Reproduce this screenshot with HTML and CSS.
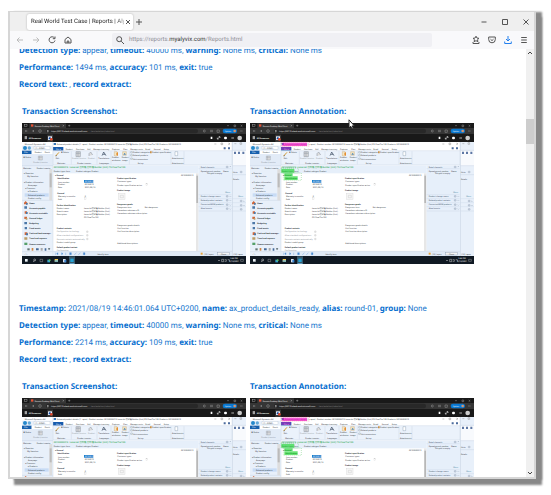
FILE: index.html
```html
<!DOCTYPE html>
<html lang="en">
<head>
<meta charset="utf-8">
<title>Real World Test Case | Reports | Alyvix</title>
<link rel="stylesheet" href="styles.css">
</head>
<body>
<svg class="defs" aria-hidden="true">
  <symbol id="desktop" viewBox="0 0 672 423">
    <rect width="672" height="423" fill="#eaf1fb"/>
    <!-- remote browser -->
    <rect width="672" height="57" fill="#191919"/>
    <rect x="22" y="1" width="110" height="15" fill="#363636"/>
    <rect y="15" width="672" height="18" fill="#353535"/>
    <rect x="72" y="17" width="456" height="14" rx="7" fill="#282828"/>
    <g fill="none" stroke="#aaa" stroke-width="1.3">
      <rect x="8" y="5" width="7" height="6"/><path d="M122 6l4 4m0-4l-4 4M138 8h7m-3-3v6M615 8h6M636 6h5v5h-5zM656 6l5 5m0-5l-5 5M16 24h-6m3-3l-3 3 3 3M30 24h6m-3-3l3 3-3 3"/>
      <circle cx="54" cy="24" r="4"/><rect x="76" y="23" width="4" height="4"/><circle cx="547" cy="24" r="3"/><path d="M564 22h9m-9 4h9M585 21h7v7h-7zM654 24h8"/>
    </g>
    <rect x="27" y="4" width="7" height="7" fill="#e65335"/>
    <rect x="602" y="17" width="43" height="14" rx="7" fill="#0878d2"/>
    <circle cx="638" cy="24" r="4" fill="#d8946c"/>
    <g fill="#eee">
      <text x="38" y="11">Remote Desktop Web Client</text>
      <text x="88" y="26">https://00115.rdweb.wvd.microsoft.com</text><text x="206" y="26" fill="#888">/arm/webclient/index.html</text>
      <text x="608" y="26">Update</text><text x="20" y="47" class="strong">All Resources</text>
    </g>
    <path d="M8 41h7m-7 3h7m-7 3h7" stroke="#fff" stroke-width="2"/>
    <rect x="76" y="35" width="17" height="22" fill="#3b3b3b"/><path d="M78 40h12v11H78z" fill="#e9f0fc"/><path d="M80 45l4-4 5 8h-9z" fill="#164c9b"/><circle cx="88" cy="49" r="4" fill="#e24a2a"/>
    <g fill="#fff"><path d="M566 41h5v7h-5zM608 41h5v8h-5zM606 43h9v4h-9z"/><circle cx="653" cy="45" r="7" fill="#ccc"/><path d="M628 44h8v2h-8z"/></g>
    <path d="M586 48l8-7m-8 3v4h4m0-7h4v4" fill="none" stroke="#fff" stroke-width="1.6"/>
    <!-- navigation pane -->
    <rect y="57" width="92" height="342" fill="#e8f0fa"/>
    <rect y="57" width="92" height="11" fill="#fff"/>
    <circle cx="9" cy="75" r="6" fill="#2588cb"/><circle cx="22" cy="75" r="5" fill="#65a9d8"/>
    <rect x="36" y="70" width="48" height="9" fill="#fff" stroke="#aebdce"/>
    <rect y="83" width="29" height="10" fill="#1760ad"/><rect x="29" y="83" width="63" height="10" fill="#fff"/>
    <rect y="93" width="92" height="35" fill="#e2ebf7"/><path d="M0 128h92M0 232h92" stroke="#bac8da"/>
    <path d="M49 99h12v12H49zM49 103h12m-8-4v12" fill="#ddd" stroke="#8993a0"/>
    <rect x="82" y="138" width="8" height="94" fill="#ddd"/><rect x="83" y="151" width="6" height="42" fill="#bbb"/>
    <rect x="8" y="211" width="72" height="10" fill="#c8dcf5"/>
    <g fill="#303640">
      <text x="8" y="65">Microsoft Dynamics AX</text><text x="39" y="77">(1) › DEMO ›</text><text x="7" y="90" fill="#fff">File</text><text x="38" y="90">Product</text><text x="68" y="90">Purch</text>
      <text x="4" y="104">✖ Delete</text><text x="34" y="120" fill="#8b929b">Product/service</text><text x="4" y="137">Maintain</text><text x="44" y="137">Product master</text>
      <text x="6" y="152">▸ Favorites</text><text x="16" y="162">My favorites</text><text x="6" y="179">▾ Product information</text><text x="18" y="189">Area page</text><text x="10" y="199">▾ Common</text><text x="18" y="208">▸ Products</text><text x="18" y="218">Released products</text><text x="18" y="227">Product config</text>
    </g>
    <g class="strong" fill="#303640">
      <text x="22" y="242">Home</text><text x="22" y="257">Accounts payable</text><text x="22" y="273">Accounts receivable</text><text x="22" y="288">General ledger</text><text x="22" y="303">Budgeting</text><text x="22" y="318">Fixed assets</text><text x="22" y="334">Cash and bank manage..</text><text x="22" y="349">Travel and expense</text><text x="22" y="365">Human resources</text>
    </g>
    <g fill="#d0683c"><path d="M6 239l5-5 5 5v5H6zM8 265h7v7H8zM7 281h8v7H7zM8 328h8v8H8z"/></g>
    <g fill="#4c78a8"><path d="M12 240h5v5h-5zM7 250h8v7H7zM7 297h8v7H7zM8 312h7v7H8zM12 331h6v6h-6zM12 267h5v6h-5z"/></g>
    <g fill="#bc9c66"><path d="M7 343h9v7H7zM11 285h5v5h-5z"/></g><path d="M7 359h9v7H7z" fill="#55a06a"/>
    <path d="M16 376h7v6h-7z" fill="#677"/><path d="M29 375h5v8h-5z" fill="#cf8645"/><path d="M42 376h8v6h-8zM68 376h5v7h-5z" fill="#466b9a"/><path d="M56 375h6v8h-6z" fill="#aaa"/><path d="M78 376h7l-4 6z" fill="#455"/>
    <path d="M0 386h92" stroke="#bcc9d8"/><text x="7" y="395" fill="#555">‹ 1 ›</text>
    <!-- window behind, right edge -->
    <rect x="630" y="57" width="42" height="342" fill="#e8f0fa"/><rect x="632" y="83" width="40" height="45" fill="#f8fafd"/><path d="M631 57v342M632 82h40M632 128h40M632 155h40" stroke="#bac8da"/>
    <path d="M637 62h6m11-3h5v5h-5z" fill="none" stroke="#666"/>
    <g fill="#5e78a5"><path d="M636 86h6v7h-6zM648 86h6v7h-6zM661 86h6v7h-6z"/></g>
    <!-- detail window -->
    <rect x="93" y="57" width="537" height="342" fill="#fff"/>
    <rect x="93" y="72" width="31" height="11" fill="#175bad"/>
    <path d="M93 83h537v43H93z" fill="#ebf2fb"/><path d="M93 83h537M93 126h537M93 57v342M630 57v342M148 85v39M225 85v39M267 85v39M322 85v39M447 85v39M486 85v39" stroke="#bdc9df" fill="none"/>
    <rect x="95" y="60" width="7" height="6" fill="#3876b8"/>
    <path d="M577 63h6m14-3h5v5h-5zM619 60l5 5m0-5l-5 5" fill="none" stroke="#555"/>
    <rect x="93" y="127" width="436" height="24" fill="#e6effa"/><rect x="529" y="127" width="101" height="258" fill="#e6effa"/>
    <rect x="522" y="151" width="7" height="234" fill="#e7e7e7"/><rect x="523" y="158" width="5" height="82" fill="#b8b8b8"/>
    <path d="M101 99l10-11" stroke="#d69c30" stroke-width="3"/><path d="M101 99l3-1" stroke="#333" stroke-width="2"/>
    <path d="M162 86h13v15h-13zM162 91h13m-7-5v15M201 99v-7l5-5 6 9" fill="#ddd" stroke="#9aa2ac" stroke-width="2"/>
    <path d="M240 98l5-11 7 11m-9-4h7" fill="none" stroke="#33445b" stroke-width="2"/>
    <path d="M277 86h8v13h-8zM302 86h11v11h-11z" fill="#f7e7c2" stroke="#bd9658"/><path d="M282 93l6-7v14z" fill="#e68e2f"/><path d="M304 95l4-6 4 6z" fill="#4b87bd"/>
    <path d="M326 86h5v4h-5zM326 95h5v4h-5zM326 105h5v4h-5zM459 86h8v12h-8z" fill="#fff" stroke="#667e99"/><path d="M384 85h5v6h-5z" fill="#ce9146"/><path d="M605 73h6v6h-6zM618 73h6v6h-6z" fill="#4b6b9d"/>
    <rect x="186" y="171" width="28" height="8" fill="#1674c7"/>
    <rect x="187" y="224" width="5" height="5" fill="#fff" stroke="#ccc"/><rect x="372" y="182" width="5" height="5" fill="#fff" stroke="#ccc"/>
    <rect x="290" y="212" width="19" height="17" fill="#f6f6f6" stroke="#ccc"/><path d="M295 217h9v7h-9z" fill="none" stroke="#bbb"/>
    <g fill="#353941">
      <text x="104" y="66">Released product details (1 - apex)  - Product number: 00100000015, LaserJet 打印機 Builder (Unit) P5 ClearTier100, Products: 00100000015</text>
      <text x="102" y="80" fill="#fff">File ▾</text><text x="131" y="80">Product</text><text x="162" y="80">Purchase</text><text x="196" y="80">Sell</text><text x="214" y="80">Manage inventory</text><text x="270" y="80">Engineer</text><text x="304" y="80">Plan</text><text x="325" y="80">Manage costs</text><text x="370" y="80">Retail</text><text x="395" y="80">General</text><text x="425" y="80">Setup</text>
      <text x="117" y="90">✖ Delete</text><text x="101" y="107">Edit</text><text x="150" y="108" fill="#959ba4">Product/service</text><text x="198" y="108" fill="#959ba4">Product</text><text x="229" y="108">Translations</text><text x="270" y="106">Product</text><text x="270" y="113">attributes</text><text x="299" y="106">Product</text><text x="300" y="113">image</text>
      <text x="333" y="90">Product categories</text><text x="390" y="90">Product specification</text><text x="333" y="100">Related products</text><text x="333" y="110">Unit conversions</text><text x="450" y="107">Attachments</text>
      <text x="106" y="122">Maintain</text><text x="166" y="122">Product master</text><text x="232" y="122">Languages</text><text x="347" y="122">Set up</text><text x="450" y="122">Attachments</text>
      <text x="95" y="135" class="record" fill="#27a447">00100000015 : LaserJet 打印機 打印機 Builder (Unit) P5 ClearTier100</text>
      <text x="95" y="146">Product type: Item</text><text x="162" y="146">Product subtype: Product</text><text x="477" y="158">00100000015</text>
      <text x="108" y="179">Item number</text><text x="188" y="178" fill="#fff">00100015</text><text x="108" y="187">Product</text><text x="188" y="187">00100015</text><text x="108" y="196">Date</text><text x="188" y="196">2021/08/19</text>
      <text x="108" y="221">Warranty in months</text><text x="188" y="221">0</text><text x="108" y="231">Sold</text>
      <text x="104" y="257">Product name</text><text x="186" y="257">LaserJet打印機 Builder (Unit)</text><text x="104" y="266">Search name</text><text x="186" y="266">LaserJet打印機 Builder (Unit)</text><text x="104" y="275">Description</text><text x="186" y="275">LaserJet打印機 Builder (Unit)</text><text x="186" y="284">P5 ClearTier100</text>
      <text x="286" y="178">Customer types</text><text x="286" y="188">Product specification active</text><text x="286" y="256">Dangerous item</text><text x="368" y="256">Not dangerous</text><text x="286" y="265">Hazardous substance ID</text><text x="286" y="274">Hazardous substance description</text>
      <text x="286" y="310">Dangerous goods details</text><text x="286" y="318">Unit function</text><text x="286" y="327">Unit function description</text><text x="286" y="363">Additional descriptions</text>
      <text x="536" y="146">Operating unit number</text><text x="604" y="146">Name</text><text x="554" y="154">The grid is empty.</text><text x="610" y="210" fill="#4c87a4">More</text><text x="649" y="222" fill="#4c87a4">More</text><text x="633" y="151">Units</text><text x="633" y="170">Details</text>
      <text x="634" y="395">(10) | apex</text>
    </g>
    <g class="strong" fill="#30343b">
      <text x="99" y="158">▴ General</text><text x="106" y="168">Identification</text><text x="106" y="212">General</text><text x="104" y="248">Further identification</text><text x="104" y="318">Product variants</text><text x="104" y="374">Default product variant</text>
      <text x="285" y="168">Product specification</text><text x="285" y="205">Product image</text><text x="285" y="246">Dangerous goods</text>
    </g>
    <g fill="#8e9298"><text x="104" y="328">Configuration technology</text><text x="104" y="339">Allow standard configurations</text><text x="104" y="350">Generate variants automatically</text><text x="104" y="360" fill="#444">Product model group</text><text x="104" y="383">Configuration</text><path d="M194 324h4v4h-4zM194 335h4v4h-4zM194 346h4v4h-4z" fill="none" stroke="#aaa"/></g>
    <g fill="#384c64"><text x="536" y="134">Retail channels</text><text x="536" y="222">Product change cases</text><text x="536" y="234">Related product variants</text><text x="536" y="247">Connected BOM products</text><text x="536" y="259">Attachments</text></g>
    <path d="M530 137h99M530 215h99M530 227h99M530 239h99M530 251h99M530 264h99M632 227h40M632 239h40M632 251h40M632 264h40" stroke="#c4d1e3"/>
    <path d="M613 130h5v4h-5zM613 218h5v4h-5zM613 230h5v4h-5zM613 243h5v4h-5zM613 255h5v4h-5zM655 145h5v4h-5zM655 232h5v4h-5zM655 245h5v4h-5zM655 257h5v4h-5zM623 132l2-2 2 2M623 220l2 2 2-2M623 232l2 2 2-2M623 245l2 2 2-2M623 257l2 2 2-2M664 234l2 2 2-2M664 247l2 2 2-2" fill="none" stroke="#6c7f99"/>
    <path d="M93 385h537v14H93z" fill="#e0eaf7"/><path d="M93 385h537" stroke="#b8c7db"/>
    <path d="M101 389v7m7-7l-4 3 4 3zM119 389l4 3-4 3zM131 389v7M143 389h5v6h-5zM157 396l6-7M169 396l6-7M184 389h5v6h-5z" fill="#4c8dd0" stroke="#4c8dd0"/><text x="226" y="395" fill="#333">Identify item</text><rect x="536" y="389" width="6" height="6" fill="#e7a33d"/><text x="546" y="395" fill="#444">(10) | apex</text>
    <rect x="587" y="388" width="35" height="8" fill="#f4f4f4" stroke="#7d8da3"/><text x="597" y="395" fill="#333">Close</text>
    <!-- taskbar -->
    <rect y="399" width="672" height="24" fill="#101923"/>
    <path d="M9 408h8v8H9z" fill="#eef5fa"/><path d="M34 416l3-3" stroke="#eee" stroke-width="2"/><circle cx="38" cy="411" r="3" fill="none" stroke="#eee" stroke-width="1.4"/><path d="M54 409h8v7h-8z" fill="none" stroke="#ddd"/>
    <path d="M76 410h8v8h-8z" fill="#39a1ce"/><circle cx="83" cy="412" r="3" fill="#61c05e"/><path d="M98 408h10v8H98z" fill="#f4cb57"/><path d="M98 412h10v4H98z" fill="#69bde6"/><path d="M123 408h8v10h-8z" fill="#d5e1ef"/><path d="M127 411h6v7h-6z" fill="#3a83cf"/>
    <path d="M141 400h18v23h-18z" fill="#37596d"/><path d="M145 407h10v10h-10z" fill="#26a3d4"/><path d="M143 421h14v2h-14z" fill="#78c0ea"/>
    <path d="M588 414l3-3 3 3M599 409h6v7h-6zM608 410h5v5h-5M617 410h5v5" fill="none" stroke="#eee" stroke-width="1.3"/><path d="M656 409h8v6h-8z" fill="none" stroke="#ddd"/>
    <g fill="#fff"><text x="625" y="409">2:46 PM</text><text x="622" y="418">8/19/2021</text></g>
  </symbol>
  <symbol id="marks" viewBox="0 0 672 423">
    <g fill="#ef12c4"><rect x="97" y="59" width="74" height="10" opacity=".7"/><rect x="94" y="71" width="28" height="10" opacity=".45"/></g>
    <path d="M94 57h84v12H94z" fill="none" stroke="#e4283e" stroke-dasharray="3 3"/>
    <g fill="#17d52a" opacity=".65"><path d="M94 137h39v12H94zM103 151h25v8h-25zM103 160h40v11h-40z"/></g>
    <path d="M93 135h52v15H93zM100 150h54v22h-54z" fill="none" stroke="#33b940" stroke-dasharray="3 3"/>
  </symbol>
</svg>

<div class="window">
  <header class="tabs">
    <div class="tab"><span class="tab-title">Real World Test Case | Reports | Aly</span>
      <button aria-label="Close tab"><svg class="tiny" viewBox="0 0 8 8"><path d="M2 2l4 4m0-4L2 6"/></svg></button></div>
    <button class="new-tab" aria-label="New tab"><svg class="icon" viewBox="0 0 10 10"><path d="M5 2v6M2 5h6"/></svg></button>
    <div class="controls">
      <button aria-label="Minimize"><svg class="icon" viewBox="0 0 10 10"><path d="M2.5 5h5"/></svg></button>
      <button aria-label="Maximize"><svg class="icon" viewBox="0 0 10 10"><path d="M2.5 2.5h5v5h-5z"/></svg></button>
      <button aria-label="Close"><svg class="icon" viewBox="0 0 10 10"><path d="M2.5 2.5l5 5m0-5l-5 5"/></svg></button>
    </div>
  </header>
  <nav class="toolbar">
    <div class="group">
      <button class="off" aria-label="Back"><svg class="icon" viewBox="0 0 10 10"><path d="M8 5H2m2.5-2.5L2 5l2.5 2.5"/></svg></button>
      <button class="off" aria-label="Forward"><svg class="icon" viewBox="0 0 10 10"><path d="M2 5h6M5.500 2.500L8 5 5.500 7.500"/></svg></button>
      <button aria-label="Reload"><svg class="icon" viewBox="0 0 10 10"><path d="M7.500 3A3 3 0 1 0 8 5.500M8 1.500v2.200H5.800"/></svg></button>
      <button aria-label="Home"><svg class="icon" viewBox="0 0 10 10"><path d="M2 4.500L5 2l3 2.500V8H2zM4.200 8V6h1.600v2"/></svg></button>
    </div>
    <label class="address">
      <svg class="icon" viewBox="0 0 10 10" role="img" aria-label="Search"><circle cx="4.200" cy="4.200" r="2.500"/><path d="M6.200 6.200L9 9"/></svg>
      <span>https://reports.<b>myalyvix.com</b>/Reports.html</span>
    </label>
    <div class="group right">
      <button aria-label="Bookmarks"><svg class="icon" viewBox="0 0 10 10"><path d="M5 1.200l1 1.900 2 .2-1.500 1.400.4 2L5 5.700 3.100 6.700l.4-2L2 3.300l2-.2zM2 7v1.500h6V7"/></svg></button>
      <button aria-label="Pocket"><svg class="icon" viewBox="0 0 10 10"><path d="M1.700 2h6.600v2.500a3.300 3.300 0 0 1-6.600 0zM3.500 4.200L5 5.600l1.500-1.400"/></svg></button>
      <button class="download" aria-label="Downloads"><svg class="icon" viewBox="0 0 10 10"><path d="M5 1v5M3 4l2 2 2-2M1.700 6.500v2h6.600v-2"/></svg></button>
      <button aria-label="Menu"><svg class="icon" viewBox="0 0 10 10"><path d="M2.200 2.500h5.600M2.200 5h5.600M2.200 7.500h5.600"/></svg></button>
    </div>
  </nav>
  <div class="view">
    <main class="report">
      <section>
        <p><b>Detection type:</b> appear, <b>timeout:</b> 40000 ms, <b>warning:</b> None ms, <b>critical:</b> None ms</p>
        <p><b>Performance:</b> 1494 ms, <b>accuracy:</b> 101 ms, <b>exit:</b> true</p>
        <p><b>Record text:</b> , <b>record extract:</b></p>
        <div class="shots">
          <figure><figcaption>Transaction Screenshot:</figcaption><svg class="shot" viewBox="0 0 672 423"><use href="#desktop"/></svg></figure>
          <figure><figcaption>Transaction Annotation:</figcaption><svg class="shot" viewBox="0 0 672 423"><use href="#desktop"/><use href="#marks"/></svg>
            <svg class="cursor" viewBox="0 0 7 11"><path d="M1 .8v8l1.800-1.500L4 10l1.300-.6-1.100-2.500h2.200z"/></svg></figure>
        </div>
      </section>
      <section>
        <p><b>Timestamp:</b> 2021/08/19 14:46:01.064 UTC+0200, <b>name:</b> ax_product_details_ready, <b>alias:</b> round-01, <b>group:</b> None</p>
        <p><b>Detection type:</b> appear, <b>timeout:</b> 40000 ms, <b>warning:</b> None ms, <b>critical:</b> None ms</p>
        <p><b>Performance:</b> 2214 ms, <b>accuracy:</b> 109 ms, <b>exit:</b> true</p>
        <p><b>Record text:</b> , <b>record extract:</b></p>
        <div class="shots">
          <figure><figcaption>Transaction Screenshot:</figcaption><svg class="shot" viewBox="0 0 672 423"><use href="#desktop"/></svg></figure>
          <figure><figcaption>Transaction Annotation:</figcaption><svg class="shot" viewBox="0 0 672 423"><use href="#desktop"/><use href="#marks"/></svg></figure>
        </div>
      </section>
    </main>
    <div class="scrollbar">
      <svg class="arrow" viewBox="0 0 8 8"><path d="M2 5l2-2 2 2"/></svg>
      <div class="track"><div class="thumb"></div></div>
      <svg class="arrow" viewBox="0 0 8 8"><path d="M2 3l2 2 2-2"/></svg>
    </div>
  </div>
</div>
</body>
</html>
```
FILE: styles.css
```css
* { box-sizing: border-box; }
body {
  margin: 0;
  height: 100vh;
  padding: 11px 15px 16px 8px;
  background: #fff;
  font: 8px/17px Roboto, sans-serif;
  text-rendering: geometricPrecision;
}
.defs { position: absolute; width: 0; height: 0; }
button { display: grid; place-items: center; padding: 0; border: 0; background: none; color: #555; }
symbol { font: 6px Roboto, "Noto Sans CJK SC", sans-serif; }
.strong { font-weight: 700; }
.record { font-size: 7px; }
.window {
  display: flex;
  flex-direction: column;
  height: 100%;
  border: 2px solid #d6d6d6;
  border-top-width: 1px;
  background: #fff;
  box-shadow: 6px 6px 2px #888, 6px 1px 2px #888;
}
.icon { width: 10px; height: 10px; }
.tiny { display: block; width: 8px; height: 8px; }
.icon, .tiny, .arrow { fill: none; stroke: currentColor; stroke-width: 1; }
.tabs { display: flex; align-items: center; height: 19px; padding-left: 17px; background: #efefef; }
.tab {
  display: flex;
  align-items: center;
  justify-content: space-between;
  width: 106px;
  height: 16px;
  padding: 0 1px 0 4px;
  border-radius: 2px;
  background: #fff;
  box-shadow: 0 0 2px #aaa;
  color: #222;
  font: 6px/16px Roboto, sans-serif;
}
.tab-title {
  flex: 1;
  overflow: hidden;
  white-space: nowrap;
  mask-image: linear-gradient(to right, #000 90%, #0006);
}
.new-tab { margin-left: 1px; }
.controls { display: flex; gap: 11px; margin-left: auto; padding-right: 3px; }
.toolbar { display: flex; align-items: center; height: 18px; padding: 0 5px; background: #f9f9fb; }
.group { display: flex; gap: 6px; width: 97px; }
.group.right { justify-content: flex-end; }
.off { color: #bbb; }
.download { color: #2480ee; }
.address {
  display: flex;
  flex: 1;
  align-items: center;
  gap: 4px;
  height: 14px;
  padding-left: 3px;
  border-radius: 2px;
  background: #f0f0f4;
  color: #8d8d94;
  font: 6px/14px Roboto, sans-serif;
}
.address b { color: #333; font-weight: 400; }
.address .icon { color: #555; }
.view { display: flex; flex: 1; min-height: 0; overflow: hidden; }
.report { flex: 1; min-width: 0; margin-top: -7px; padding-left: 9px; color: #1676ce; }
.report p { margin: 0; }
.report b, figcaption { color: #0870cf; font-family: "Noto Sans", sans-serif; font-weight: 700; }
.report section { margin-bottom: 36px; }
.shots { display: grid; grid-template-columns: repeat(2, minmax(0, 224px)); gap: 4px; padding: 11px 3px 0; }
figure { position: relative; margin: 0; }
figcaption { line-height: 15px; }
.shot { display: block; width: 100%; margin-top: 4px; }
.cursor { position: absolute; top: 15px; left: 98px; width: 7px; height: 11px; fill: #fff; stroke: #222; stroke-width: 1; }
.scrollbar { display: flex; flex-direction: column; width: 8px; background: #f0f0f0; color: #444; }
.arrow { width: 8px; height: 8px; }
.track { flex: 1; padding-top: 62px; }
.thumb { height: 25px; background: #cdcdcd; }
```
